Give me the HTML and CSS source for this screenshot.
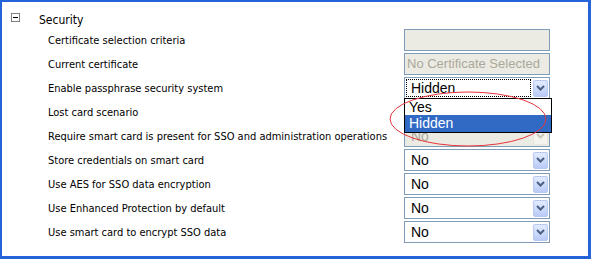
FILE: index.html
```html
<!DOCTYPE html>
<html>
<head>
<meta charset="utf-8">
<link rel="stylesheet" href="styles.css">
</head>
<body>
<div class="frame">
  <div class="header">
    <span class="toggle"><span class="minus"></span></span>
    <span class="title">Security</span>
  </div>
  <div class="rows">
    <div class="row"><span class="label">Certificate selection criteria</span><div class="field disabled"></div></div>
    <div class="row"><span class="label">Current certificate</span><div class="field disabled">No Certificate Selected</div></div>
    <div class="row"><span class="label">Enable passphrase security system</span>
      <div class="ctl">
        <div class="select"><span class="value focus">Hidden</span><span class="btn"><svg width="9" height="6" viewBox="0 0 9 6"><path d="M1 1 L4.5 4.5 L8 1" fill="none" stroke="#4d6185" stroke-width="2"/></svg></span></div>
        <div class="list">
          <div class="opt">Yes</div>
          <div class="opt sel">Hidden</div>
        </div>
      </div>
    </div>
    <div class="row"><span class="label">Lost card scenario</span><div class="select"><span class="value"></span><span class="btn"><svg width="9" height="6" viewBox="0 0 9 6"><path d="M1 1 L4.5 4.5 L8 1" fill="none" stroke="#4d6185" stroke-width="2"/></svg></span></div></div>
    <div class="row"><span class="label">Require smart card is present for SSO and administration operations</span><div class="select dis"><span class="value">No</span><span class="btn"><svg width="9" height="6" viewBox="0 0 9 6"><path d="M1 1 L4.5 4.5 L8 1" fill="none" stroke="#c9c7ba" stroke-width="2"/></svg></span></div></div>
    <div class="row"><span class="label">Store credentials on smart card</span><div class="select"><span class="value">No</span><span class="btn"><svg width="9" height="6" viewBox="0 0 9 6"><path d="M1 1 L4.5 4.5 L8 1" fill="none" stroke="#4d6185" stroke-width="2"/></svg></span></div></div>
    <div class="row"><span class="label">Use AES for SSO data encryption</span><div class="select"><span class="value">No</span><span class="btn"><svg width="9" height="6" viewBox="0 0 9 6"><path d="M1 1 L4.5 4.5 L8 1" fill="none" stroke="#4d6185" stroke-width="2"/></svg></span></div></div>
    <div class="row"><span class="label">Use Enhanced Protection by default</span><div class="select"><span class="value">No</span><span class="btn"><svg width="9" height="6" viewBox="0 0 9 6"><path d="M1 1 L4.5 4.5 L8 1" fill="none" stroke="#4d6185" stroke-width="2"/></svg></span></div></div>
    <div class="row"><span class="label">Use smart card to encrypt SSO data</span><div class="select"><span class="value">No</span><span class="btn"><svg width="9" height="6" viewBox="0 0 9 6"><path d="M1 1 L4.5 4.5 L8 1" fill="none" stroke="#4d6185" stroke-width="2"/></svg></span></div></div>
  </div>
  <svg class="mark" width="591" height="259" viewBox="0 0 591 259">
    <ellipse cx="468" cy="119" rx="78" ry="27" fill="none" stroke="#e8353c" stroke-width="1"/>
  </svg>
</div>
</body>
</html>
```

FILE: styles.css
```css
html, body {
  margin: 0;
  padding: 0;
  background: #ffffff;
}
.frame {
  position: relative;
  width: 591px;
  height: 259px;
  box-sizing: border-box;
  border: 2px solid #2563d8;
  border-right-width: 3px;
  border-bottom-width: 3px;
  background: #ffffff;
  font-family: "DejaVu Sans Condensed", "DejaVu Sans", sans-serif;
  font-size: 11px;
  color: #000;
}
.header {
  display: flex;
  align-items: flex-start;
  margin-top: 11px;
  margin-left: 9px;
  height: 16px;
}
.toggle {
  width: 9px;
  height: 9px;
  box-sizing: border-box;
  border: 1px solid #808080;
  display: flex;
  align-items: center;
  justify-content: center;
}
.minus {
  width: 5px;
  height: 1px;
  background: #000;
}
.title {
  margin-left: 19px;
  font-size: 12px;
  line-height: 14px;
}
.rows {
  display: grid;
  row-gap: 2px;
  padding-left: 46px;
}
.row {
  display: grid;
  grid-template-columns: 356px 146px;
  align-items: center;
  height: 22px;
}
.label {
  white-space: nowrap;
}
.field, .select {
  box-sizing: border-box;
  height: 22px;
  width: 146px;
  border: 1px solid #7f9db9;
  font-family: "Liberation Sans", Arial, sans-serif;
  font-size: 14px;
}
.field.disabled {
  background: #ebebe4;
  color: #aca899;
  padding-left: 2px;
  line-height: 20px;
  font-size: 13px;
  white-space: nowrap;
  overflow: hidden;
}
.ctl {
  position: relative;
  width: 146px;
  height: 22px;
}
.select {
  display: flex;
  align-items: center;
  background: #fff;
  padding: 1px;
}
.value {
  flex: 1;
  height: 18px;
  line-height: 18px;
  padding-left: 5px;
  box-sizing: border-box;
}
.value.focus {
  border: 1px dotted #000;
  line-height: 16px;
  padding-left: 4px;
}
.btn {
  width: 15px;
  height: 17px;
  box-sizing: border-box;
  margin-left: 2px;
  border: 1px solid #b6c9f3;
  border-radius: 2px;
  background: linear-gradient(#e3ebfe, #b8cbf7);
  display: flex;
  align-items: center;
  justify-content: center;
}
.select.dis {
  background: #ebebe4;
  color: #aca899;
}
.select.dis .btn {
  background: #f4f3ee;
  border-color: #e8e6dd;
}
.list {
  position: absolute;
  left: 0;
  top: 21px;
  width: 148px;
  box-sizing: border-box;
  border: 1px solid #000;
  background: #fff;
  font-family: "Liberation Sans", Arial, sans-serif;
  font-size: 14px;
  z-index: 2;
}
.opt {
  height: 16px;
  line-height: 16px;
  padding-left: 4px;
}
.opt.sel {
  background: #316ac5;
  color: #fff;
  height: 17px;
}
.mark {
  position: absolute;
  left: -2px;
  top: -2px;
  z-index: 3;
  pointer-events: none;
}
```
